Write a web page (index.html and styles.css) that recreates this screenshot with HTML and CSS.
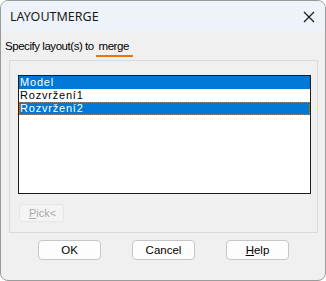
FILE: index.html
```html
<!DOCTYPE html>
<html lang="en">
<head>
    <meta charset="UTF-8">
    <meta name="viewport" content="width=device-width, initial-scale=1.0">
    <title>LAYOUTMERGE</title>
    <link rel="stylesheet" href="styles.css">
</head>
<body>
    <div class="window">
        <div class="titlebar">
            <span class="title">LAYOUTMERGE</span>
            <svg class="close" width="12" height="12" viewBox="0 0 12 12">
                <path d="M1 1 L11 11 M11 1 L1 11" stroke="#1a1a1a" stroke-width="1.2" fill="none"/>
            </svg>
        </div>

        <div class="content">
            <p class="prompt">Specify layout(s) to <span class="keyword">merge</span></p>

            <div class="group">
                <ul class="list">
                    <li class="item selected">Model</li>
                    <li class="item">Rozvržení1</li>
                    <li class="item selected focused">Rozvržení2</li>
                </ul>
                <button class="pick" disabled><u>P</u>ick&lt;</button>
            </div>

            <div class="actions">
                <button class="btn">OK</button>
                <button class="btn">Cancel</button>
                <button class="btn"><u>H</u>elp</button>
            </div>
        </div>
    </div>
</body>
</html>
```

FILE: styles.css
```css
* { box-sizing: border-box; }
body { margin: 0; background: #ffffff; font-family: "Liberation Sans", sans-serif; }

.window { width: 326px; height: 281px; border: 1px solid #9b9b9b; border-radius: 8px; overflow: hidden; display: flex; flex-direction: column; background: #f0f0f0; }

.titlebar { height: 30px; flex: none; background: #eef3f9; display: flex; align-items: center; justify-content: space-between; padding: 0 10px 0 9px; }
.title { font-family: "Noto Sans", sans-serif; font-size: 12.5px; color: #1a1a1a; }
.close { display: block; margin-top: 1px; }

.content { flex: 1; padding: 0 0 0 4px; }
.prompt { margin: 8px 0 0; height: 14px; font-size: 11.5px; letter-spacing: -0.45px; line-height: 14px; color: #000; }
.keyword { display: inline-block; border-bottom: 2px solid #e8750c; line-height: 13px; padding: 0 4px 2px 3px; margin-left: -1px; }

.group { margin: 7px 0 0 4px; width: 309px; height: 173px; border: 1px solid #dadada; padding: 14px 0 0 8px; }

.list { margin: 0; padding: 0; list-style: none; width: 293px; height: 119px; border: 1px solid #1c1c1c; background: #fff; font-size: 11px; letter-spacing: 0.8px; }
.item { height: 13px; line-height: 13px; padding-left: 1px; color: #000; white-space: nowrap; }
.selected { background: #0078d7; color: #fff; }
.focused { outline: 1px dotted #e8750c; outline-offset: -1px; }

.pick { display: block; margin: 10px 0 0 1px; width: 45px; height: 18px; padding: 0 0 0 2px; border: 1px solid #e6e6e6; border-radius: 3px; background: #f4f4f4; color: #a8a8a8; font-family: "Liberation Sans", sans-serif; font-size: 11px; }

.actions { display: flex; gap: 31px; padding: 7px 0 0 33px; }
.btn { width: 63px; height: 20px; padding: 0; border: 1px solid #c6c6c6; border-radius: 4px; background: #fdfdfd; color: #000; font-family: "Liberation Sans", sans-serif; font-size: 11.5px; }
```
